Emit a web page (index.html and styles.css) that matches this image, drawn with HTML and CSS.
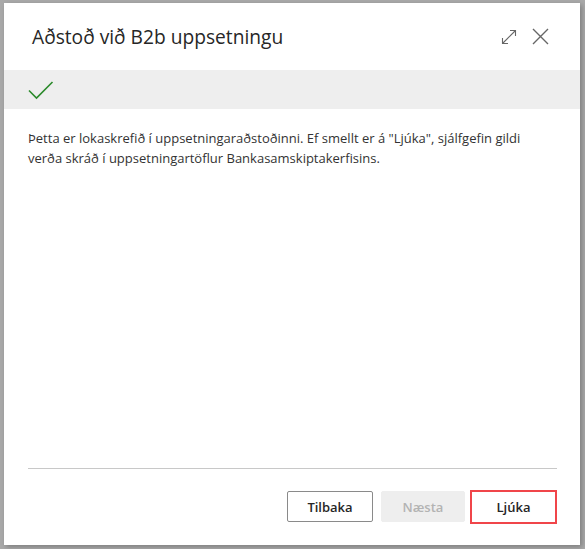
FILE: index.html
```html
<!DOCTYPE html>
<html lang="is">
  <head>
    <meta charset="UTF-8" />
    <meta name="viewport" content="width=device-width, initial-scale=1.0" />
    <title>Aðstoð við B2b uppsetningu</title>
    <link rel="stylesheet" href="styles.css">
  </head>
  <body>
    <div class="dialog">
      <div class="dialog-header">
        <h1>Aðstoð við B2b uppsetningu</h1>
        <div class="header-actions">
          <button class="icon-button" title="Stækka">
            <svg width="16" height="16" viewBox="0 0 16 16" fill="none" stroke="#666" stroke-width="1.1">
              <path d="M1.5 14.5 L14.5 1.5" />
              <path d="M9 1.5 H14.5 V7" />
              <path d="M1.5 9 V14.5 H7" />
            </svg>
          </button>
          <button class="icon-button" title="Loka">
            <svg width="17" height="17" viewBox="0 0 17 17" fill="none" stroke="#666" stroke-width="1.4">
              <path d="M1 1 L16 16 M16 1 L1 16" />
            </svg>
          </button>
        </div>
      </div>

      <div class="status-band">
        <svg width="26" height="20" viewBox="0 0 26 20" fill="none" stroke="#2b8a2b" stroke-width="1.6">
          <path d="M1 10.5 L8.5 18 L24.5 2" />
        </svg>
      </div>

      <div class="dialog-content">
        <p>Þetta er lokaskrefið í uppsetningaraðstoðinni. Ef smellt er á "Ljúka", sjálfgefin gildi verða skráð í uppsetningartöflur Bankasamskiptakerfisins.</p>
      </div>

      <div class="dialog-footer">
        <button class="btn">Tilbaka</button>
        <button class="btn btn-next" disabled>Næsta</button>
        <button class="btn btn-focus">Ljúka</button>
      </div>
    </div>
  </body>
</html>
```

FILE: styles.css
```css
body {
  margin: 0;
  padding: 3px 5px 4px 4px;
  background-color: #a9a9a9;
  font-family: "Open Sans", "Noto Sans", sans-serif;
  color: #212121;
}
.dialog {
  height: 542px;
  background-color: #fff;
  display: flex;
  flex-direction: column;
  box-shadow: 2px 2px 5px rgba(0, 0, 0, 0.25);
}
.dialog-header {
  height: 67px;
  display: flex;
  align-items: center;
  justify-content: space-between;
  padding: 0 31px 0 28px;
}
.dialog-header h1 {
  margin: 0;
  font-size: 19.2px;
  font-weight: 400;
  color: #262626;
}
.header-actions {
  display: flex;
  align-items: center;
  gap: 15px;
}
.icon-button {
  border: none;
  background: none;
  padding: 0;
  display: flex;
  cursor: pointer;
}
.status-band {
  height: 39px;
  background-color: #eeeeee;
  display: flex;
  align-items: center;
  padding-left: 24px;
}
.dialog-content {
  flex: 1;
  padding: 19px 24px 16px;
}
.dialog-content p {
  margin: 0;
  font-size: 13px;
  line-height: 20px;
  color: #333;
}
.dialog-footer {
  margin: 0 23px 0 24px;
  border-top: 1px solid #c8c8c8;
  display: flex;
  justify-content: flex-end;
  align-items: center;
  gap: 8px;
  height: 75px;
  padding-bottom: 1px;
}
.btn {
  width: 86px;
  height: 31px;
  font-family: inherit;
  font-size: 13px;
  font-weight: 600;
  color: #262626;
  background-color: #fff;
  border: 1px solid #8a8a8a;
  border-radius: 2px;
}
.btn:disabled {
  background-color: #eeeeee;
  border-color: #eeeeee;
  color: #b3b3b3;
}
.btn-next {
  width: 84px;
}
.btn-focus {
  width: 87px;
  height: 34px;
  margin-left: -3px;
  border: 2px solid #f0454a;
  border-radius: 0;
}
```
